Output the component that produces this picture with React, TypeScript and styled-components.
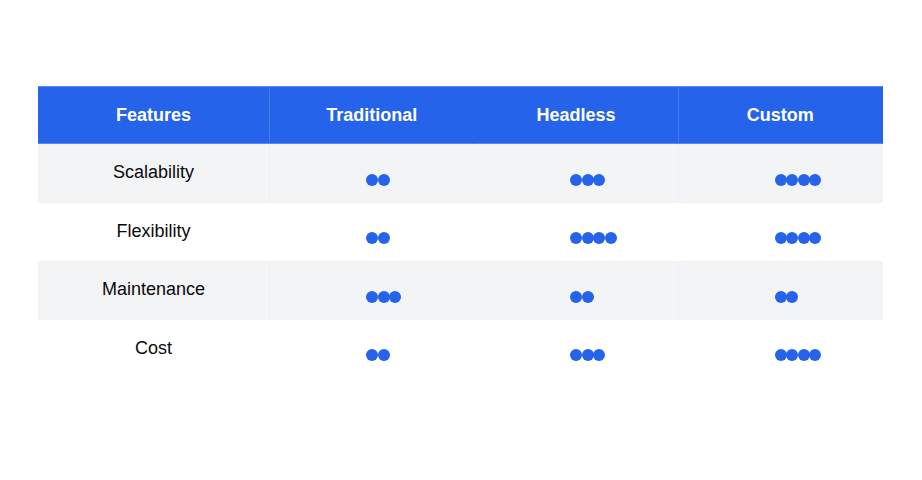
import React from 'react';
import styled, { createGlobalStyle } from 'styled-components';

const GlobalStyle = createGlobalStyle`
  html, body {
    margin: 0;
    padding: 0;
    background: #ffffff;
    font-family: "Liberation Sans", Arial, Helvetica, sans-serif;
  }
`;

const Page = styled.div`
  width: 922px;
  height: 480px;
  padding: 86px 39px 0 38px;
  box-sizing: border-box;
`;

const Grid = styled.div`
  display: grid;
  grid-template-columns: 232px repeat(3, 1fr);
  grid-auto-rows: 58.5px;
  grid-template-rows: 58px;
  width: 845px;
`;

// only the 1st and 3rd columns carry a divider in the reference
const HeadCell = styled.div<{ $divider: boolean }>`
  display: flex;
  align-items: center;
  justify-content: center;
  background: #2563eb;
  color: #ffffff;
  font-size: 18px;
  font-weight: 700;
  border-top: 1px solid #5a8af0;
  border-bottom: 1px solid #5a8af0;
  border-right: 1px solid ${(p) => (p.$divider ? '#4479ee' : '#2563eb')};
  box-sizing: border-box;
  &:last-child {
    border-right-color: #6f98f2;
  }
`;

const Cell = styled.div<{ $striped: boolean; $divider?: boolean }>`
  background: ${(p) => (p.$striped ? '#f3f4f6' : '#ffffff')};
  border-right: 1px solid
    ${(p) => (p.$striped ? (p.$divider ? '#eceef1' : '#f3f4f6') : '#ffffff')};
  box-sizing: border-box;
`;

const FeatureCell = styled(Cell)`
  display: flex;
  align-items: center;
  justify-content: center;
  font-size: 18px;
  color: #0a0a0a;
  padding-bottom: 1px;
`;

const DotCell = styled(Cell)`
  display: flex;
  align-items: center;
  padding-left: calc(50% - 6px);
  padding-top: 13px;
`;

const Dot = styled.span`
  width: 12px;
  height: 12px;
  border-radius: 50%;
  background: #2563eb;
  margin-right: -0.5px;
`;

const Dots = ({ count }: { count: number }) => (
  <>
    {Array.from({ length: count }).map((_, i) => (
      <Dot key={i} />
    ))}
  </>
);

const headers = ['Features', 'Traditional', 'Headless', 'Custom'];

const rows: [string, number, number, number][] = [
  ['Scalability', 2, 3, 4],
  ['Flexibility', 2, 4, 4],
  ['Maintenance', 3, 2, 2],
  ['Cost', 2, 3, 4],
];

const App = () => {
  return (
    <Page>
      <GlobalStyle />
      <Grid>
        {headers.map((h, i) => (
          <HeadCell key={h} $divider={i === 0 || i === 2}>{h}</HeadCell>
        ))}
        {rows.map(([name, a, b, c], i) => {
          const striped = i % 2 === 0;
          return (
            <React.Fragment key={name}>
              <FeatureCell $striped={striped} $divider>{name}</FeatureCell>
              <DotCell $striped={striped}><Dots count={a} /></DotCell>
              <DotCell $striped={striped} $divider><Dots count={b} /></DotCell>
              <DotCell $striped={striped}><Dots count={c} /></DotCell>
            </React.Fragment>
          );
        })}
      </Grid>
    </Page>
  );
};

export default App;
